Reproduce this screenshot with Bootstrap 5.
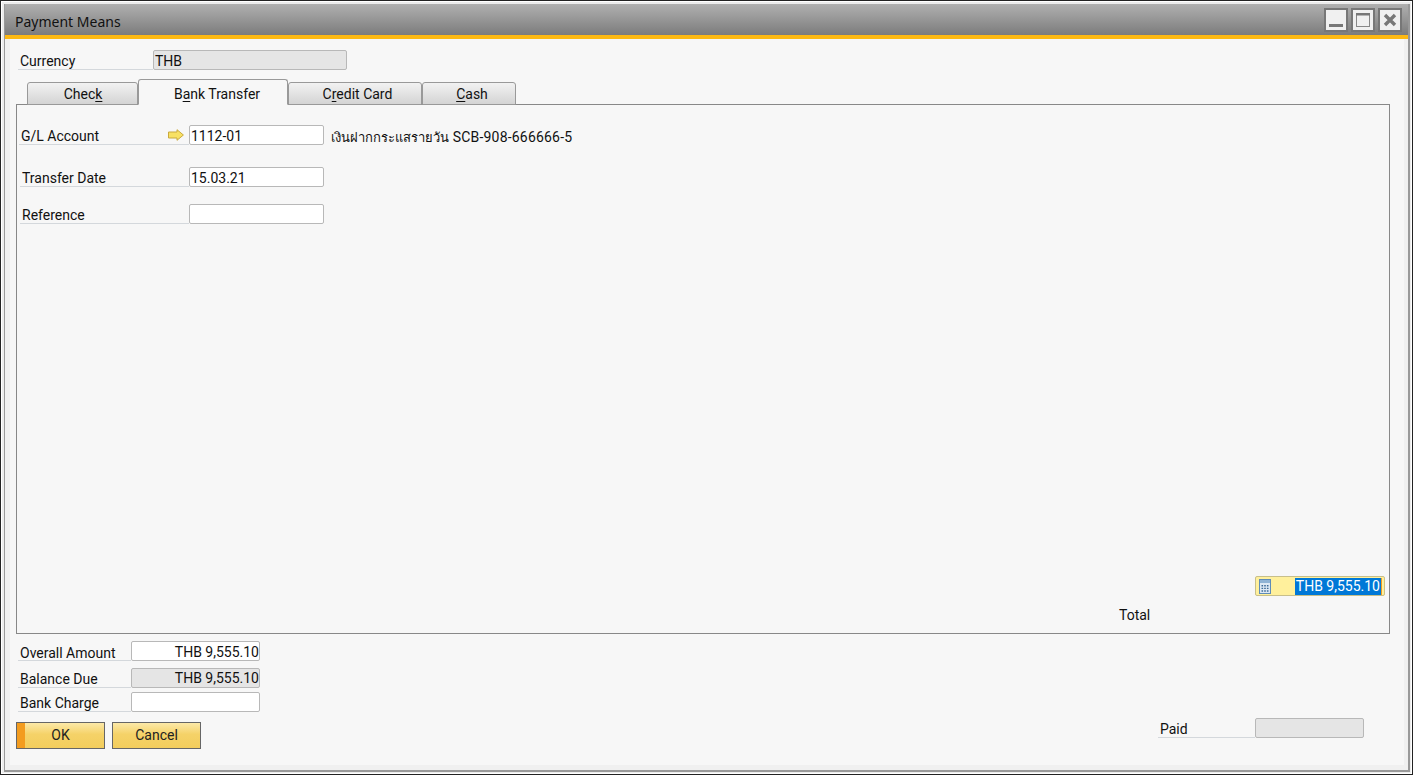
<!DOCTYPE html>
<html lang="en">
<head>
<meta charset="utf-8">
<title>Payment Means</title>
<link href="https://cdn.jsdelivr.net/npm/bootstrap@5.3.0/dist/css/bootstrap.min.css" rel="stylesheet">
<style>
html,body{height:775px;overflow:hidden;background:#fff}
body{font-family:Roboto,"Noto Sans","Liberation Sans",sans-serif;font-size:14px;color:#111;line-height:20px}
.win-outer{height:775px;background:#ececec;border:1px solid #222;padding:3px 2px 2px 3px;box-shadow:inset 0 0 0 1px #fff}
.win-inner{height:100%;border-left:1px solid #999;border-right:2px solid #999;border-bottom:2px solid #999;display:flex;flex-direction:column;background:#f0f0f0}
.titlebar{height:35px;flex:none;background:linear-gradient(#b0b0b0,#7c7c7c);border-bottom:4px solid #fdb913;padding:4px 6px 0 10px}
.title-text{font-family:"Noto Sans","Liberation Sans",sans-serif}
.win-btn{width:24px;height:24px;display:block}
.win-ctrls{gap:3px}
.formarea{flex:1;background:#f7f7f7;margin:0 4px 5px 5px;padding:0 0 0 6px;display:flex;flex-direction:column}
.lbl{border-bottom:1px solid #d4d8dc;height:20px;line-height:22px;flex:none;padding-left:2px}
.lbl-low{line-height:24px}
.lbl-gl{width:170px;padding:0 5px 0 2px}
.lbl-gl span{padding-top:2px}
.fld{height:20px;border:1px solid #b8b8b8;border-radius:2px;background:#fff;line-height:20px;padding:0 1px;flex:none}
.fld-low{line-height:21px}
.fld-high{line-height:18px}
.fld-off{background:#e5e5e5}
.num{text-align:right;padding-right:0}
.w-cur-l{width:135px}.w-cur-f{width:194px}
.w-tab-l{width:169px}.w-tab-f{width:135px}
.w-sum-l{width:113px}.w-sum-f{width:129px}
.w-paid-l{width:97px}.w-paid-f{width:109px}
.cur-row{margin:11px 0 0 2px}
.tab-strip{margin:9px 0 -1px 11px;height:26px;align-items:flex-end;flex-wrap:nowrap;border:0;position:relative;z-index:1}
.tab-strip .nav-link{height:23px;border:1px solid #999;border-radius:3px 3px 0 0;background:linear-gradient(#f2f2f2,#d4d4d4);text-align:center;line-height:22px;padding:0;color:#111}
.tab-strip .nav-link.active{height:26px;background:#f7f7f7;line-height:29px;border-bottom-color:#f7f7f7;color:#111}
.tab-strip u{text-underline-offset:2px}
.tab-check{width:111px;padding-left:1px!important}
.tab-bank{width:150px;padding-left:8px!important}
.tab-credit{width:134px;padding-left:5px!important}
.tab-cash{width:94px;padding-left:6px!important}
.tabpanel{width:1374px;height:530px;border:1px solid #888;display:flex;flex-direction:column;padding:20px 4px 8px 2px;flex:none}
.row-tr{margin:22px 0 0 1px}
.row-ref{margin:17px 0 0 1px}
.gl-text{margin-left:7px;height:20px;line-height:24px;letter-spacing:.2px}
.thai-text{font-size:13px;letter-spacing:0;font-family:"Noto Sans","Liberation Sans",sans-serif}
.sel-box{width:130px;height:20px;background:#fff09c;border:1px solid #c8bf8a;border-radius:2px;padding:0 2px 0 3px;line-height:18px}
.sel-text{background:#0078d7;color:#fff;padding:0 1px;height:17px;line-height:17px;border-right:1px solid #f39c1f}
.total-lbl{margin:9px 0 0 1100px;height:20px;line-height:21px}
.bottom-area{margin:7px 0 0 0}
.sum-col{margin-left:2px}
.sum-row2{margin-top:7px}
.sum-row3{margin-top:4px}
.sapbtn{width:89px;height:27px;border:1px solid #666;border-radius:0;background:linear-gradient(#fce9a8,#f5d268 45%,#f3cd5c);text-align:center;line-height:23px;color:#222;padding:0;font-size:14px}
.sapbtn-def{box-shadow:inset 8px 0 0 #f39c1f}
.btn-group-x{margin:10px 0 0 -2px;gap:7px}
.paid-row{margin:0 40px 11px auto}
</style>
</head>
<body>
<div class="win-outer"><div class="win-inner">
  <div class="titlebar d-flex align-items-start justify-content-between">
    <span class="pt-1 title-text">Payment Means</span>
    <span class="d-flex win-ctrls">
      <svg class="win-btn" viewBox="0 0 24 24"><rect x="1" y="1" width="22" height="22" fill="#f0f0f0" stroke="#777" stroke-width="2"/><rect x="5" y="16" width="14" height="3" fill="#777"/></svg>
      <svg class="win-btn" viewBox="0 0 24 24"><rect x="1" y="1" width="22" height="22" fill="#f0f0f0" stroke="#777" stroke-width="2"/><rect x="5.5" y="5.5" width="13" height="13" fill="none" stroke="#888"/><rect x="5" y="5" width="14" height="2.5" fill="#777"/></svg>
      <svg class="win-btn" viewBox="0 0 24 24"><rect x="1" y="1" width="22" height="22" fill="#f0f0f0" stroke="#777" stroke-width="2"/><path d="M7 7l10 10M17 7L7 17" stroke="#777" stroke-width="3.4" fill="none"/></svg>
    </span>
  </div>
  <div class="formarea">
    <div class="d-flex cur-row">
      <div class="lbl w-cur-l">Currency</div>
      <div class="fld fld-off w-cur-f">THB</div>
    </div>
    <ul class="nav tab-strip">
      <li class="nav-item"><a class="nav-link tab-check">Chec<u>k</u></a></li>
      <li class="nav-item"><a class="nav-link active tab-bank">B<u>a</u>nk Transfer</a></li>
      <li class="nav-item"><a class="nav-link tab-credit">C<u>r</u>edit Card</a></li>
      <li class="nav-item"><a class="nav-link tab-cash"><u>C</u>ash</a></li>
    </ul>
    <div class="tabpanel">
      <div class="d-flex">
        <div class="lbl lbl-gl d-flex justify-content-between align-items-center">
          <span>G/L Account</span>
          <svg width="16" height="12" viewBox="0 0 16 12"><path d="M.5 3h8.5V.7L15.4 6 9 11.3V9H.5z" fill="#f8e164" stroke="#c9a93c"/></svg>
        </div>
        <div class="fld fld-low w-tab-f">1112-01</div>
        <div class="gl-text"><span class="thai-text">เงินฝากกระแสรายวัน</span> SCB-908-666666-5</div>
      </div>
      <div class="d-flex row-tr">
        <div class="lbl w-tab-l">Transfer Date</div>
        <div class="fld w-tab-f">15.03.21</div>
      </div>
      <div class="d-flex row-ref">
        <div class="lbl w-tab-l">Reference</div>
        <div class="fld w-tab-f"></div>
      </div>
      <div class="sel-box d-flex align-items-center justify-content-between ms-auto mt-auto">
        <svg width="12" height="15" viewBox="0 0 12 15"><rect width="12" height="15" fill="#5f8cb8"/><rect x="1" y="1" width="10" height="13" fill="#dce8f3"/><rect x="1" y="1" width="10" height="3" fill="#8fb3d4"/><path d="M2.5 6h1.6v1.4H2.5zM5.2 6h1.6v1.4H5.2zM7.9 6h1.6v1.4H7.9zM2.5 8.7h1.6v1.4H2.5zM5.2 8.7h1.6v1.4H5.2zM7.9 8.7h1.6v1.4H7.9zM2.5 11.3h1.6v1.4H2.5zM5.2 11.3h1.6v1.4H5.2zM7.9 11.3h1.6v1.4H7.9z" fill="#3f6c98"/></svg>
        <span class="sel-text">THB 9,555.10</span>
      </div>
      <div class="total-lbl">Total</div>
    </div>
    <div class="d-flex bottom-area">
      <div class="sum-col">
        <div class="d-flex">
          <div class="lbl lbl-low w-sum-l">Overall Amount</div>
          <div class="fld fld-low num w-sum-f">THB 9,555.10</div>
        </div>
        <div class="d-flex sum-row2">
          <div class="lbl w-sum-l">Balance Due</div>
          <div class="fld fld-off fld-high num w-sum-f">THB 9,555.10</div>
        </div>
        <div class="d-flex sum-row3">
          <div class="lbl w-sum-l">Bank Charge</div>
          <div class="fld w-sum-f"></div>
        </div>
        <div class="d-flex btn-group-x">
          <button type="button" class="btn sapbtn sapbtn-def">OK</button>
          <button type="button" class="btn sapbtn">Cancel</button>
        </div>
      </div>
      <div class="d-flex align-self-end paid-row">
        <div class="lbl w-paid-l">Paid</div>
        <div class="fld fld-off w-paid-f"></div>
      </div>
    </div>
  </div>
</div></div>
</body>
</html>
